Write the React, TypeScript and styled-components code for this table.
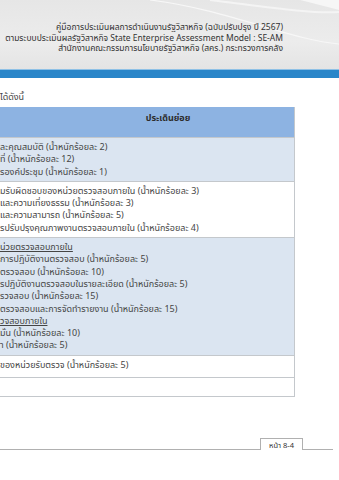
import React from 'react';
import styled, { createGlobalStyle } from 'styled-components';

const GlobalStyle = createGlobalStyle`
  html, body {
    margin: 0;
    padding: 0;
    background: #ffffff;
  }
  body {
    width: 339px;
    height: 480px;
    overflow: hidden;
    font-family: Tahoma, "Noto Sans Thai", "DejaVu Sans", sans-serif;
    color: #454545;
  }
`;

const Page = styled.div`
  display: flex;
  flex-direction: column;
  width: 339px;
  height: 480px;
`;

const Header = styled.header`
  position: relative;
  height: 69px;
  box-sizing: border-box;
  padding: 23px 56px 0 0;
  background: linear-gradient(180deg, #e6e6e6 0%, #ececec 60%, #e4e4e4 100%);
  text-align: right;
  overflow: hidden;
`;

const Swoosh = styled.svg`
  position: absolute;
  top: 0;
  right: 0;
  width: 339px;
  height: 69px;
`;

const HeaderLine = styled.div`
  position: relative;
  font-size: 8.5px;
  line-height: 10.5px;
  color: #333333;
  white-space: nowrap;
`;

const BlueBar = styled.div`
  height: 8px;
  background: #2a86c9;
  border-top: 1px solid #8fc1e6;
`;

const Intro = styled.p`
  margin: 13px 0 4px 0;
  font-size: 9px;
  line-height: 12px;
  white-space: nowrap;
`;

const Table = styled.div`
  width: 295px;
  box-sizing: border-box;
  border-right: 1px solid #c4c8cc;
  border-bottom: 1px solid #c4c8cc;
`;

const HeadCell = styled.div`
  height: 30px;
  box-sizing: border-box;
  padding: 5px 0 0 42px;
  background: #8db3e2;
  font-size: 9px;
  line-height: 12px;
  font-weight: bold;
  color: #2c2c2c;
  text-align: center;
`;

const Row = styled.div<{ $tint?: boolean; $min?: number }>`
  box-sizing: border-box;
  min-height: ${(p) => p.$min ?? 0}px;
  padding: 3px 0;
  background: ${(p) => (p.$tint ? '#dbe5f1' : '#ffffff')};
  border-top: 1px solid #c4c8cc;
`;

const Line = styled.div<{ $u?: boolean }>`
  font-size: 9px;
  line-height: 12.3px;
  white-space: nowrap;
  text-decoration: ${(p) => (p.$u ? 'underline' : 'none')};
`;

const Footer = styled.footer`
  display: flex;
  align-items: flex-end;
  margin: 41px 6px 0 0;
`;

const Rule = styled.div<{ $w?: number }>`
  flex: ${(p) => (p.$w ? `0 0 ${p.$w}px` : '1')};
  border-bottom: 1px solid #b0b0b0;
`;

const PageTab = styled.div`
  width: 43px;
  box-sizing: border-box;
  border: 1px solid #b0b0b0;
  border-bottom: none;
  padding: 2px 0 0 0;
  font-size: 7.5px;
  line-height: 9px;
  text-align: center;
  color: #333;
`;

const rows: { tint?: boolean; min?: number; lines: { t: string; u?: boolean }[] }[] = [
  {
    tint: true,
    lines: [
      { t: 'ละคุณสมบัติ (น้ำหนักร้อยละ 2)' },
      { t: 'ที่ (น้ำหนักร้อยละ 12)' },
      { t: 'รองค์ประชุม (น้ำหนักร้อยละ 1)' },
    ],
  },
  {
    lines: [
      { t: 'มรับผิดชอบของหน่วยตรวจสอบภายใน (น้ำหนักร้อยละ 3)' },
      { t: 'และความเที่ยงธรรม (น้ำหนักร้อยละ 3)' },
      { t: 'และความสามารถ (น้ำหนักร้อยละ 5)' },
      { t: 'รปรับปรุงคุณภาพงานตรวจสอบภายใน (น้ำหนักร้อยละ 4)' },
    ],
  },
  {
    tint: true,
    lines: [
      { t: 'น่วยตรวจสอบภายใน', u: true },
      { t: 'การปฏิบัติงานตรวจสอบ (น้ำหนักร้อยละ 5)' },
      { t: 'ตรวจสอบ (น้ำหนักร้อยละ 10)' },
      { t: 'รปฏิบัติงานตรวจสอบในรายละเอียด (น้ำหนักร้อยละ 5)' },
      { t: 'รวจสอบ (น้ำหนักร้อยละ 15)' },
      { t: 'ตรวจสอบและการจัดทำรายงาน (น้ำหนักร้อยละ 15)' },
      { t: 'วจสอบภายใน', u: true },
      { t: 'มั่น (น้ำหนักร้อยละ 10)' },
      { t: 'า (น้ำหนักร้อยละ 5)' },
    ],
  },
  { min: 22, lines: [{ t: 'ของหน่วยรับตรวจ (น้ำหนักร้อยละ 5)' }] },
  { min: 19, lines: [] },
];

export default function App() {
  return (
    <Page>
      <GlobalStyle />
      <Header>
        <Swoosh viewBox="0 0 339 69" preserveAspectRatio="none">
          <path d="M150 0 C 230 10, 290 40, 339 44" stroke="#f7f7f7" strokeWidth="1.2" fill="none" />
          <path d="M210 0 C 260 6, 310 14, 339 12" stroke="#f4f4f4" strokeWidth="2" fill="none" />
          <path d="M300 0 L 339 0 L 339 10 C 325 6, 312 3, 300 0 Z" fill="#f6f6f6" />
        </Swoosh>
        <HeaderLine>คู่มือการประเมินผลการดำเนินงานรัฐวิสาหกิจ (ฉบับปรับปรุง ปี 2567)</HeaderLine>
        <HeaderLine>ตามระบบประเมินผลรัฐวิสาหกิจ State Enterprise Assessment Model : SE-AM</HeaderLine>
        <HeaderLine>สำนักงานคณะกรรมการนโยบายรัฐวิสาหกิจ (สคร.) กระทรวงการคลัง</HeaderLine>
      </Header>
      <BlueBar />
      <Intro>ได้ดังนี้</Intro>
      <Table>
        <HeadCell>ประเด็นย่อย</HeadCell>
        {rows.map((r, i) => (
          <Row key={i} $tint={r.tint} $min={r.min}>
            {r.lines.map((l, j) => (
              <Line key={j} $u={l.u}>
                {l.t}
              </Line>
            ))}
          </Row>
        ))}
      </Table>
      <Footer>
        <Rule />
        <PageTab>หน้า 8-4</PageTab>
        <Rule $w={30} />
      </Footer>
    </Page>
  );
}
